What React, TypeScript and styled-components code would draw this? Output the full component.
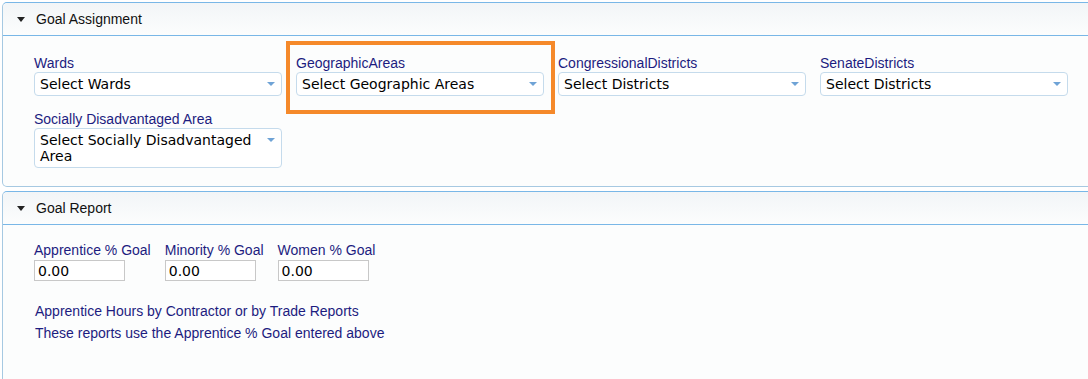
import * as React from "react";
import styled, { createGlobalStyle } from "styled-components";

const GlobalStyle = createGlobalStyle`
  body {
    margin: 0;
    background: #ffffff;
    overflow: hidden;
    font-family: "Liberation Sans", Arial, sans-serif;
  }
`;

function Caret() {
  return (
    <svg width="8" height="5" viewBox="0 0 8 5">
      <path d="M0 0 H8 L4 5 Z" fill="#222" />
    </svg>
  );
}

function Panel({
  title,
  grow = false,
  top = 19,
  children,
}: {
  title: string;
  grow?: boolean;
  top?: number;
  children: React.ReactNode;
}) {
  return (
    <PanelBox $grow={grow}>
      <PanelHeader>
        <Caret />
        <span>{title}</span>
      </PanelHeader>
      <PanelBody $top={top}>{children}</PanelBody>
    </PanelBox>
  );
}

function SelectField({
  label,
  placeholder,
  highlight = false,
}: {
  label: string;
  placeholder: string;
  highlight?: boolean;
}) {
  return (
    <Field>
      <Label>{label}</Label>
      <SelectBox>
        <span>{placeholder}</span>
        <Arrow />
      </SelectBox>
      {highlight && <Highlight />}
    </Field>
  );
}

function GoalInput({ label }: { label: string }) {
  return (
    <InputField>
      <Label>{label}</Label>
      <TextInput defaultValue="0.00" />
    </InputField>
  );
}

export default function App() {
  return (
    <>
      <GlobalStyle />
      <Page>
        <Panel title="Goal Assignment">
          <SelectGrid>
            <SelectField label="Wards" placeholder="Select Wards" />
            <SelectField label="GeographicAreas" placeholder="Select Geographic Areas" highlight />
            <SelectField label="CongressionalDistricts" placeholder="Select Districts" />
            <SelectField label="SenateDistricts" placeholder="Select Districts" />
            <SelectField label="Socially Disadvantaged Area" placeholder="Select Socially Disadvantaged Area" />
          </SelectGrid>
        </Panel>
        <Panel title="Goal Report" grow top={17}>
          <InputRow>
            <GoalInput label="Apprentice % Goal" />
            <GoalInput label="Minority % Goal" />
            <GoalInput label="Women % Goal" />
          </InputRow>
          <Note>Apprentice Hours by Contractor or by Trade Reports</Note>
          <Note>These reports use the Apprentice % Goal entered above</Note>
        </Panel>
      </Page>
    </>
  );
}

const Page = styled.div`
  width: 1120px;
  min-height: calc(100vh + 6px);
  padding: 2px 0 0 2px;
  display: flex;
  flex-direction: column;
  gap: 4px;
`;

const PanelBox = styled.div<{ $grow: boolean }>`
  flex: ${(p) => (p.$grow ? 1 : "none")};
  border: 1px solid #a6c9e2;
  border-top-color: #79b7e7;
  border-radius: 5px;
  background: #fcfdfd;
`;

const PanelHeader = styled.div`
  height: 32px;
  display: flex;
  align-items: center;
  gap: 11px;
  padding-left: 14px;
  border-bottom: 1px solid #79b7e7;
  border-radius: 5px 5px 0 0;
  background: linear-gradient(#f2f5f7, #fcfdfd);
  font-size: 14px;
  color: #111;
`;

const PanelBody = styled.div<{ $top: number }>`
  padding: ${(p) => p.$top}px 0 18px 31px;
`;

const SelectGrid = styled.div`
  display: grid;
  grid-template-columns: repeat(4, 248px);
  column-gap: 14px;
  row-gap: 15px;
`;

const Field = styled.div`
  position: relative;
  display: flex;
  flex-direction: column;
  gap: 1px;
`;

const Label = styled.div`
  font-size: 14px;
  line-height: 16px;
  color: #1c1c80;
  white-space: nowrap;
`;

const SelectBox = styled.div`
  position: relative;
  box-sizing: border-box;
  min-height: 24px;
  padding: 3px 24px 3px 5px;
  border: 1px solid #c5dbec;
  border-radius: 4px;
  background: #ffffff;
  font-family: "DejaVu Sans", Verdana, sans-serif;
  font-size: 14px;
  line-height: 16px;
  color: #000;
`;

const Arrow = styled.i`
  position: absolute;
  right: 6px;
  top: 9px;
  width: 0;
  height: 0;
  border-left: 4px solid transparent;
  border-right: 4px solid transparent;
  border-top: 4px solid #6fa3d6;
`;

const Highlight = styled.div`
  position: absolute;
  left: -10px;
  top: -14px;
  width: 269px;
  height: 73px;
  box-sizing: border-box;
  border: 4px solid #f5892a;
  pointer-events: none;
`;

const InputRow = styled.div`
  display: flex;
  gap: 14px;
  margin-bottom: 19px;
`;

const InputField = styled.div`
  display: flex;
  flex-direction: column;
  gap: 2px;
`;

const TextInput = styled.input`
  box-sizing: border-box;
  width: 91px;
  height: 21px;
  margin: 0;
  padding: 0 3px;
  border: 1px solid #c8c8c8;
  border-radius: 0;
  font-family: "DejaVu Sans", Verdana, sans-serif;
  font-size: 14px;
  color: #000;
  outline: none;
`;

const Note = styled.div`
  font-size: 14px;
  line-height: 22px;
  color: #1c1c80;
  padding-left: 1px;
`;
